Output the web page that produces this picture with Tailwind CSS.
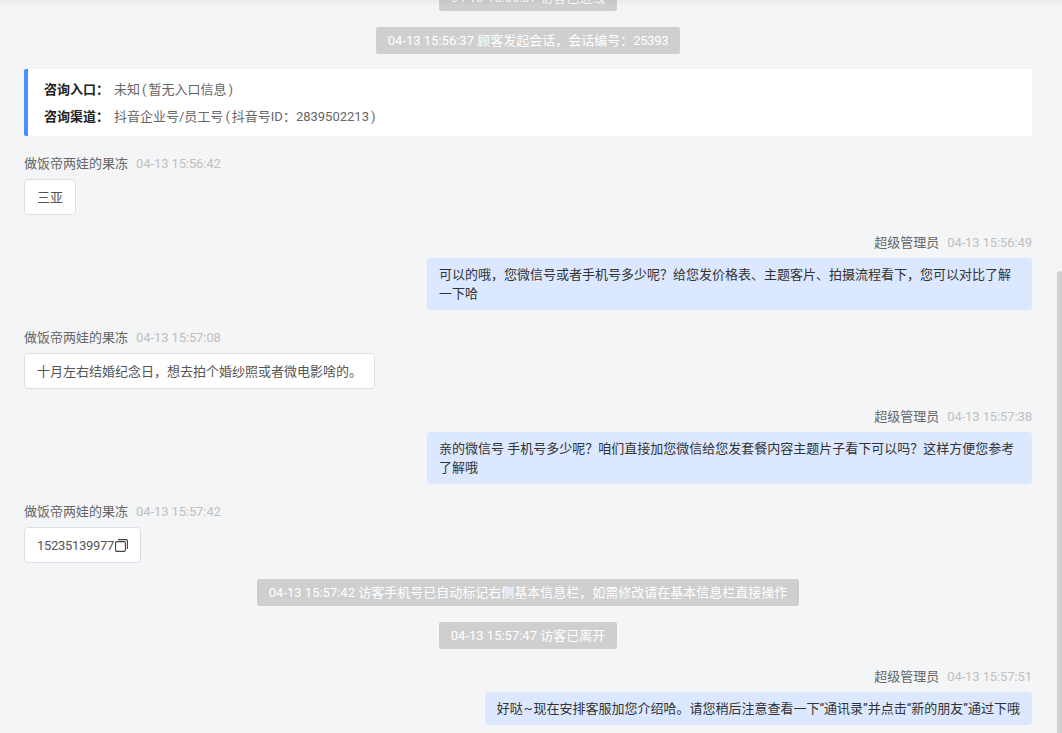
<!DOCTYPE html>
<html lang="zh-CN"><head><meta charset="utf-8"><script src="https://cdn.jsdelivr.net/npm/@tailwindcss/browser@4"></script></head>
<body class="m-0">
<div class="relative w-[1062px] h-[733px] overflow-hidden bg-[#f4f5f7] text-[13px] leading-[19px] font-['Roboto','Noto_Sans_CJK_SC',sans-serif] text-[#333]">
  <div class="absolute top-0 left-0 right-0 h-[6px] bg-gradient-to-b from-black/5 to-transparent"></div>
  <div class="absolute right-0 top-[271px] w-[5px] h-[462px] bg-[#d1d1d1] rounded-t-[3px]"></div>
  <div class="flex flex-col pl-[24px] pr-[30px] -mt-[16px]">
    <div class="self-center h-[27px] px-[12px] bg-[#cfcfcf] text-white rounded-[2px] flex items-center">04-13 15:56:37 访客已进线</div>
    <div class="self-center h-[27px] px-[12px] mt-[16px] bg-[#cfcfcf] text-white rounded-[2px] flex items-center"><span>04-13 15:56:37 顾客发起会话，会话编号：<span class="tracking-[-0.3px]">25393</span></span></div>

    <div class="mt-[15px] h-[67px] bg-white border-l-4 border-[#4c8dff] rounded-l-[2px] pl-[16px] flex flex-col justify-center gap-[8px]">
      <div class="flex"><span class="font-bold text-[#222] w-[70px]">咨询入口：</span><span class="text-[#666]">未知<span class="mx-[2px]">(</span>暂无入口信息<span class="mx-[2px]">)</span></span></div>
      <div class="flex"><span class="font-bold text-[#222] w-[70px]">咨询渠道：</span><span class="text-[#666]">抖音企业号/员工号<span class="mx-[2px]">(</span>抖音号ID：2839502213<span class="mx-[2px]">)</span></span></div>
    </div>

    <div class="mt-[18px] flex gap-[8px] items-center h-[19px]"><span class="text-[#666]">做饭帝两娃的果冻</span><span class="text-[#c0c0c0] tracking-[-0.1px]">04-13 15:56:42</span></div>
    <div class="mt-[6px] self-start h-[36px] flex items-center bg-white border border-[#dcdfe6] rounded-[4px] px-[12px] text-[#555]">三亚</div>

    <div class="mt-[18px] flex justify-end gap-[8px] items-center h-[19px]"><span class="text-[#666]">超级管理员</span><span class="text-[#c0c0c0] tracking-[-0.1px]">04-13 15:56:49</span></div>
    <div class="mt-[6px] self-end w-[605px] bg-[#dbe8ff] rounded-[4px] px-[12px] py-[7px] text-[#333]">可以的哦，您微信号或者手机号多少呢？给您发价格表、主题客片、拍摄流程看下，您可以对比了解一下哈</div>

    <div class="mt-[18px] flex gap-[8px] items-center h-[19px]"><span class="text-[#666]">做饭帝两娃的果冻</span><span class="text-[#c0c0c0] tracking-[-0.1px]">04-13 15:57:08</span></div>
    <div class="mt-[6px] self-start h-[36px] flex items-center bg-white border border-[#dcdfe6] rounded-[4px] px-[12px] text-[#555]">十月左右结婚纪念日，想去拍个婚纱照或者微电影啥的。</div>

    <div class="mt-[18px] flex justify-end gap-[8px] items-center h-[19px]"><span class="text-[#666]">超级管理员</span><span class="text-[#c0c0c0] tracking-[-0.1px]">04-13 15:57:38</span></div>
    <div class="mt-[6px] self-end w-[605px] bg-[#dbe8ff] rounded-[4px] px-[12px] py-[7px] text-[#333]">亲的微信号 手机号多少呢？咱们直接加您微信给您发套餐内容主题片子看下可以吗？这样方便您参考了解哦</div>

    <div class="mt-[18px] flex gap-[8px] items-center h-[19px]"><span class="text-[#666]">做饭帝两娃的果冻</span><span class="text-[#c0c0c0] tracking-[-0.1px]">04-13 15:57:42</span></div>
    <div class="mt-[6px] self-start h-[36px] w-[117px] flex items-center bg-white border border-[#dcdfe6] rounded-[4px] pl-[12px] text-[#555]"><span class="tracking-[-0.3px]">15235139977</span><svg class="w-[13px] h-[13px] ml-[1px] shrink-0" viewBox="0 0 13 13" fill="none" stroke="#444" stroke-width="1.1"><rect x="0.6" y="2.6" width="9.8" height="9.8" rx="1.2"/><path d="M3 .6h8.4a1 1 0 0 1 1 1V10"/></svg></div>

    <div class="mt-[16px] self-center h-[27px] px-[12px] bg-[#cfcfcf] text-white rounded-[2px] flex items-center">04-13 15:57:42 访客手机号已自动标记右侧基本信息栏，如需修改请在基本信息栏直接操作</div>
    <div class="mt-[16px] self-center h-[27px] px-[12px] bg-[#cfcfcf] text-white rounded-[2px] flex items-center">04-13 15:57:47 访客已离开</div>

    <div class="mt-[18px] flex justify-end gap-[8px] items-center h-[19px]"><span class="text-[#666]">超级管理员</span><span class="text-[#c0c0c0] tracking-[-0.1px]">04-13 15:57:51</span></div>
    <div class="mt-[6px] self-end bg-[#dbe8ff] rounded-[4px] px-[12px] py-[7px] text-[#333]">好哒<span class="mx-[1px]">~</span>现在安排客服加您介绍哈。请您稍后注意查看一下“通讯录”并点击“新的朋友”通过下哦</div>
  </div>
</div>
</body></html>
